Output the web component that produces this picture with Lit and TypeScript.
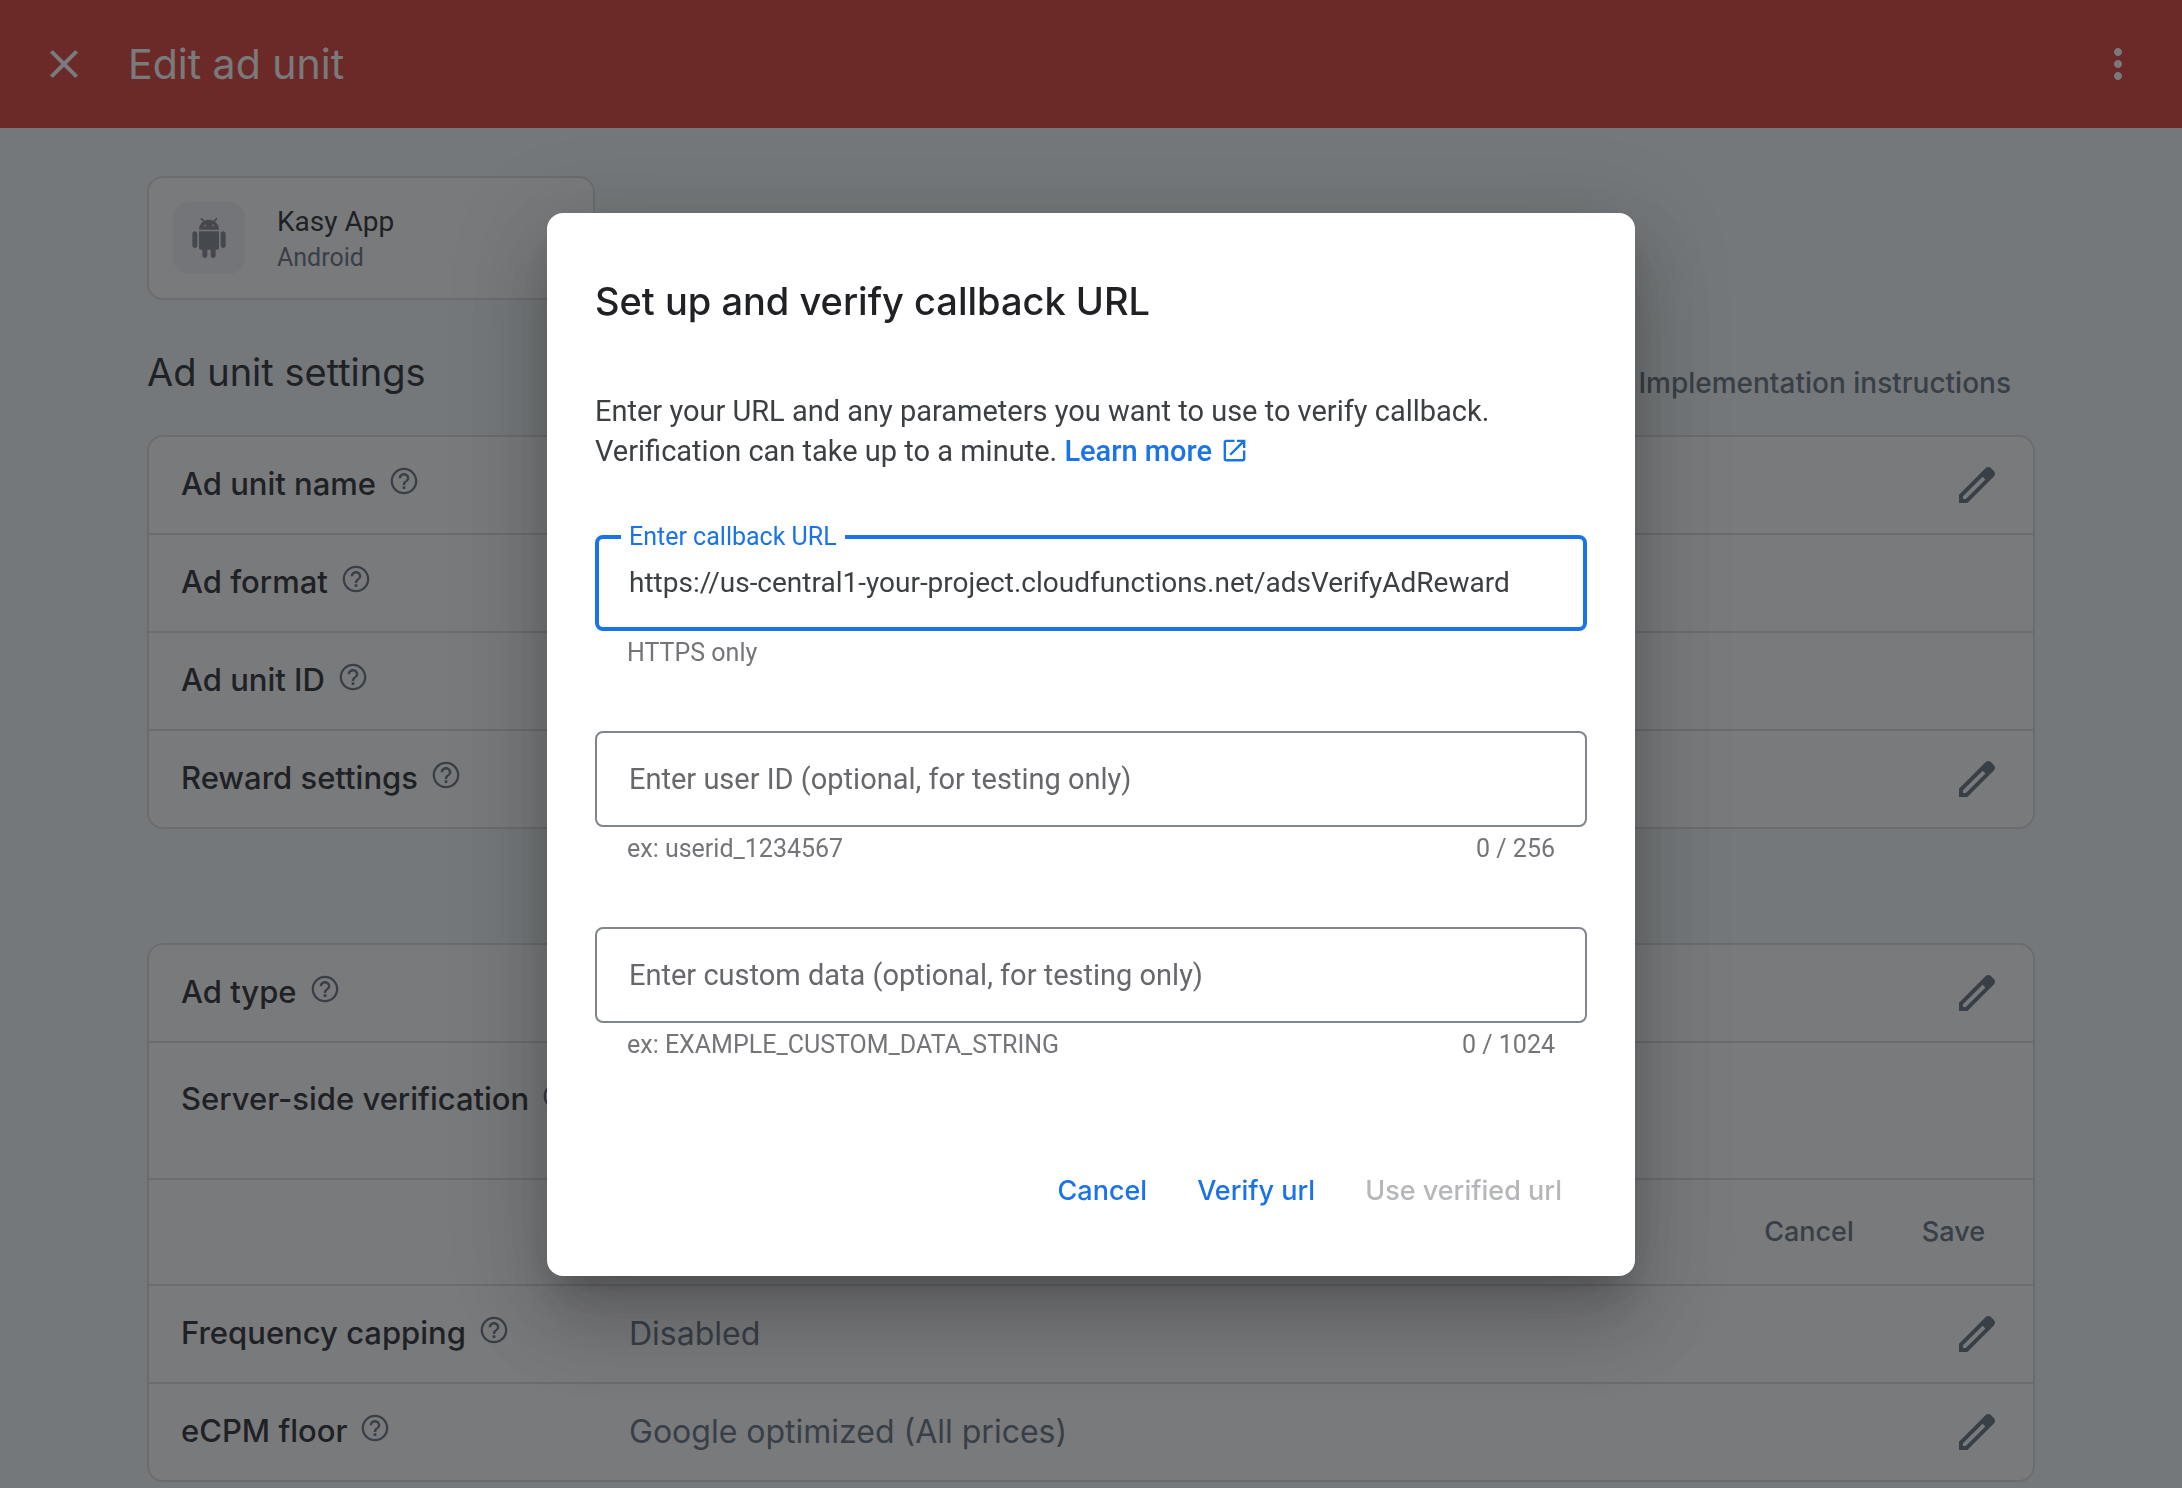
import { LitElement, html, css, svg, nothing } from "lit";
import { customElement, property, state } from "lit/decorators.js";
import { classMap } from "lit/directives/class-map.js";

const paths = {
  close: svg`<path d="M19 6.41 17.59 5 12 10.59 6.41 5 5 6.41 10.59 12 5 17.59 6.41 19 12 13.41 17.59 19 19 17.59 13.41 12z"/>`,
  more: svg`<path d="M12 8c1.1 0 2-.9 2-2s-.9-2-2-2-2 .9-2 2 .9 2 2 2zm0 2c-1.1 0-2 .9-2 2s.9 2 2 2 2-.9 2-2-.9-2-2-2zm0 6c-1.1 0-2 .9-2 2s.9 2 2 2 2-.9 2-2-.9-2-2-2z"/>`,
  edit: svg`<path d="M20.41 4.94l-1.35-1.35c-.78-.78-2.05-.78-2.83 0L3 16.82V21h4.18L20.41 7.77c.79-.78.79-2.05 0-2.83zm-14 14.12L5 19v-1.36l9.82-9.82 1.41 1.41-9.82 9.83z"/>`,
  help: svg`<path d="M11 18h2v-2h-2v2zm1-16C6.48 2 2 6.48 2 12s4.48 10 10 10 10-4.48 10-10S17.52 2 12 2zm0 18.3c-4.58 0-8.3-3.72-8.3-8.3s3.72-8.3 8.3-8.3 8.3 3.72 8.3 8.3-3.72 8.3-8.3 8.3zM12 6c-2.21 0-4 1.79-4 4h1.8c0-1.2 1-2.2 2.2-2.2s2.2 1 2.2 2.2c0 2-3.1 1.75-3.1 5h1.8c0-2.25 3.1-2.5 3.1-5 0-2.21-1.79-4-4-4z"/>`,
  launch: svg`<path d="M19 19H5V5h7V3H5c-1.11 0-2 .9-2 2v14c0 1.1.89 2 2 2h14c1.1 0 2-.9 2-2v-7h-2v7zM14 3v2h3.59l-9.83 9.83 1.41 1.41L19 6.41V10h2V3h-7z"/>`,
  android: svg`<path d="M6 18c0 .55.45 1 1 1h1v3.5c0 .83.67 1.5 1.5 1.5s1.5-.67 1.5-1.5V19h2v3.5c0 .83.67 1.5 1.5 1.5s1.5-.67 1.5-1.5V19h1c.55 0 1-.45 1-1V8H6v10zM3.5 8C2.67 8 2 8.67 2 9.5v7c0 .83.67 1.5 1.5 1.5S5 17.33 5 16.5v-7C5 8.67 4.33 8 3.5 8zm17 0c-.83 0-1.5.67-1.5 1.5v7c0 .83.67 1.5 1.5 1.5s1.5-.67 1.5-1.5v-7c0-.83-.67-1.5-1.5-1.5zm-4.97-5.84l1.3-1.3c.2-.2.2-.51 0-.71-.2-.2-.51-.2-.71 0l-1.48 1.48C13.85 1.23 12.95 1 12 1c-.96 0-1.86.23-2.66.63L7.85.15c-.2-.2-.51-.2-.71 0-.2.2-.2.51 0 .71l1.31 1.31C6.97 3.26 6 5.01 6 7h12c0-1.99-.97-3.75-2.47-4.84zM10 5H9V4h1v1zm5 0h-1V4h1v1z"/>`,
};

const icon = (name: keyof typeof paths) =>
  html`<svg class="icon" viewBox="0 0 24 24" aria-hidden="true">${paths[name]}</svg>`;

const base = css`
  * {
    box-sizing: border-box;
  }
  .icon {
    display: block;
    width: 100%;
    height: 100%;
    fill: currentColor;
  }
  button {
    margin: 0;
    padding: 0;
    border: 0;
    background: none;
    color: inherit;
    font: inherit;
    cursor: pointer;
  }
  a {
    color: inherit;
    text-decoration: none;
  }
`;

interface Setting {
  label?: string;
  value?: string;
  editable?: boolean;
  kind?: "tall" | "actions";
}

/** Bordered list of ad unit settings. */
@customElement("settings-card")
export class SettingsCard extends LitElement {
  @property({ attribute: false }) rows: Setting[] = [];

  static styles = [
    base,
    css`
      :host {
        display: block;
        border: 2px solid #dadce0;
        border-radius: 16px;
        background: #fff;
      }
      .row {
        display: grid;
        grid-template-columns: 448px 1fr auto;
        align-items: center;
        min-height: 98px;
        padding: 0 32px;
        border-bottom: 2px solid #dadce0;
      }
      .row:last-child {
        min-height: 96px;
        border-bottom: 0;
      }
      .row.tall {
        min-height: 137px;
        align-items: start;
        padding-top: 36px;
      }
      .row.actions {
        display: flex;
        justify-content: flex-end;
        gap: 20px;
        min-height: 106px;
        padding: 0 24px;
      }
      .label {
        display: flex;
        align-items: center;
        gap: 12px;
        padding-bottom: 2px;
        font-size: 31px;
        font-weight: 500;
        line-height: 40px;
        color: #202124;
        white-space: nowrap;
      }
      .help {
        width: 32px;
        height: 32px;
        margin-bottom: 6px;
        color: #5f6c7a;
      }
      .value {
        font-size: 32px;
        line-height: 40px;
        color: #5f6c7a;
      }
      .edit {
        grid-column: 3;
        width: 48px;
        height: 48px;
        color: #5f6c7a;
      }
      .action {
        padding: 0 24px;
        font-size: 27px;
        font-weight: 500;
        line-height: 72px;
        color: #5f6c7a;
      }
    `,
  ];

  private renderRow(row: Setting) {
    if (row.kind === "actions") {
      return html`<div class="row actions">
        <button class="action" type="button">Cancel</button>
        <button class="action" type="button">Save</button>
      </div>`;
    }
    return html`<div class=${classMap({ row: true, tall: row.kind === "tall" })}>
      <div class="label">
        <span>${row.label}</span>
        <button class="help" type="button" aria-label="Help: ${row.label}">${icon("help")}</button>
      </div>
      <div class="value">${row.value ?? nothing}</div>
      ${row.editable
        ? html`<button class="edit" type="button" aria-label="Edit ${row.label}">${icon("edit")}</button>`
        : nothing}
    </div>`;
  }

  render() {
    return this.rows.map((row) => this.renderRow(row));
  }
}

/** Outlined text field with a label, helper text and character counter. */
@customElement("outlined-field")
export class OutlinedField extends LitElement {
  @property() label = "";
  @property() value = "";
  @property() hint = "";
  @property({ type: Number }) max = 0;
  @property({ type: Boolean }) active = false;

  static styles = [
    base,
    css`
      :host {
        display: block;
      }
      .box {
        position: relative;
      }
      .input {
        display: block;
        width: 100%;
        height: 96px;
        margin: 0;
        padding: 0 32px;
        border: 2px solid #80868b;
        border-radius: 8px;
        outline: 0;
        background: #fff;
        color: #3c4043;
        font: 400 28px Roboto, sans-serif;
      }
      .label {
        position: absolute;
        top: 0;
        left: 34px;
        font-size: 29px;
        line-height: 96px;
        color: #66686b;
        pointer-events: none;
      }
      .box.floated .label {
        top: -12px;
        left: 26px;
        padding: 0 8px;
        background: #fff;
        font-size: 25px;
        line-height: 28px;
      }
      .box.active .input {
        padding: 0 30px;
        border: 4px solid #1a73e8;
      }
      .box.active .label {
        color: #1a73e8;
      }
      .foot {
        display: flex;
        justify-content: space-between;
        margin-top: 8px;
        padding: 0 32px;
        font-size: 25px;
        line-height: 28px;
        color: #737578;
      }
    `,
  ];

  private onInput(event: Event) {
    this.value = (event.target as HTMLInputElement).value;
  }

  render() {
    const floated = this.active || this.value !== "";
    return html`
      <div class=${classMap({ box: true, floated, active: this.active })}>
        <input
          class="input"
          id="field"
          type="text"
          .value=${this.value}
          aria-describedby="hint"
          @input=${this.onInput}
          @focus=${() => (this.active = true)}
          @blur=${() => (this.active = false)}
        />
        <label class="label" for="field">${this.label}</label>
      </div>
      <div class="foot">
        <span id="hint">${this.hint}</span>
        ${this.max ? html`<span>${this.value.length} / ${this.max}</span>` : nothing}
      </div>
    `;
  }
}

@customElement("app-root")
export class AppRoot extends LitElement {
  @state() private unitRows: Setting[] = [
    { label: "Ad unit name", editable: true },
    { label: "Ad format" },
    { label: "Ad unit ID" },
    { label: "Reward settings", editable: true },
  ];

  @state() private typeRows: Setting[] = [
    { label: "Ad type", editable: true },
    { label: "Server-side verification", kind: "tall" },
    { kind: "actions" },
    { label: "Frequency capping", value: "Disabled", editable: true },
    { label: "eCPM floor", value: "Google optimized (All prices)", editable: true },
  ];

  static styles = [
    base,
    css`
      :host {
        display: block;
        min-height: 100vh;
        background: #f2f9f9;
        font-family: Inter, sans-serif;
      }
      .bar {
        display: flex;
        align-items: center;
        gap: 40px;
        height: 128px;
        padding: 0 40px;
        background: #dc382e;
        color: #fff;
      }
      .bar-title {
        flex: 1;
        margin: 0;
        font-size: 41px;
        font-weight: 400;
        line-height: 56px;
      }
      .bar-button {
        width: 48px;
        height: 48px;
      }
      .page {
        padding: 48px 147px 0;
      }
      .app {
        display: flex;
        align-items: center;
        gap: 32px;
        width: 448px;
        height: 124px;
        padding: 0 24px;
        border: 2px solid #dadce0;
        border-radius: 16px;
        background: #fff;
        font-family: Roboto, sans-serif;
      }
      .app-icon {
        display: grid;
        place-items: center;
        width: 72px;
        height: 72px;
        border-radius: 16px;
        background: #f1f3f4;
        color: #7d868f;
      }
      .app-glyph {
        width: 40px;
        height: 40px;
      }
      .app-text {
        padding-top: 4px;
      }
      .app-name {
        font-size: 28px;
        line-height: 36px;
        color: #202124;
      }
      .app-platform {
        font-size: 25px;
        line-height: 36px;
        color: #5f6c7a;
      }
      .heading {
        display: flex;
        justify-content: space-between;
        align-items: flex-end;
        margin: 48px 0 32px;
      }
      .heading-title {
        margin: 0;
        padding-bottom: 7px;
        font-size: 38px;
        font-weight: 400;
        line-height: 48px;
        color: #202124;
      }
      .heading-link {
        padding-right: 24px;
        font-size: 28px;
        font-weight: 500;
        line-height: 40px;
        color: #5f6c7a;
      }
      .second {
        margin-top: 114px;
      }
      .backdrop {
        position: fixed;
        inset: 0;
        display: flex;
        align-items: center;
        justify-content: center;
        padding: 24px;
        background: rgba(32, 33, 36, 0.6);
      }
      .dialog {
        width: 100%;
        max-width: 1088px;
        padding: 64px 48px 49px;
        border-radius: 16px;
        background: #fff;
        box-shadow: 0 22px 30px -14px rgba(0, 0, 0, 0.2), 0 48px 76px 6px rgba(0, 0, 0, 0.14),
          0 18px 92px 16px rgba(0, 0, 0, 0.12);
        font-family: Roboto, sans-serif;
      }
      .dialog-title {
        margin: 0;
        font-family: Inter, sans-serif;
        font-size: 38px;
        font-weight: 500;
        line-height: 48px;
        color: #202124;
      }
      .dialog-text {
        margin: 66px 0 64px;
        font-size: 29px;
        line-height: 40px;
        color: #3c4043;
      }
      .learn {
        display: inline-flex;
        align-items: center;
        gap: 8px;
        font-weight: 500;
        color: #1a73e8;
      }
      .learn-icon {
        width: 29px;
        height: 29px;
      }
      .fields {
        display: grid;
        gap: 64px;
      }
      .dialog-actions {
        display: flex;
        justify-content: flex-end;
        margin-top: 96px;
        font-family: Inter, sans-serif;
      }
      .dialog-button {
        padding: 0 25px;
        font-size: 27px;
        font-weight: 500;
        line-height: 72px;
        color: #1a73e8;
      }
      .dialog-button:disabled {
        color: #b5b7b9;
        cursor: default;
      }
    `,
  ];

  render() {
    return html`
      <header class="bar">
        <button class="bar-button" type="button" aria-label="Close">${icon("close")}</button>
        <h1 class="bar-title">Edit ad unit</h1>
        <button class="bar-button" type="button" aria-label="More options">${icon("more")}</button>
      </header>

      <main class="page">
        <div class="app">
          <div class="app-icon"><div class="app-glyph">${icon("android")}</div></div>
          <div class="app-text">
            <div class="app-name">Kasy App</div>
            <div class="app-platform">Android</div>
          </div>
        </div>
        <div class="heading">
          <h2 class="heading-title">Ad unit settings</h2>
          <a class="heading-link" href="#instructions">Implementation instructions</a>
        </div>
        <settings-card .rows=${this.unitRows}></settings-card>
        <settings-card class="second" .rows=${this.typeRows}></settings-card>
      </main>

      <div class="backdrop">
        <section class="dialog" role="dialog" aria-modal="true" aria-labelledby="dialog-title">
          <h2 class="dialog-title" id="dialog-title">Set up and verify callback URL</h2>
          <p class="dialog-text">
            Enter your URL and any parameters you want to use to verify callback.<br />
            Verification can take up to a minute.
            <a class="learn" href="#learn-more">Learn more <span class="learn-icon">${icon("launch")}</span></a>
          </p>
          <div class="fields">
            <outlined-field
              active
              label="Enter callback URL"
              value="https://us-central1-your-project.cloudfunctions.net/adsVerifyAdReward"
              hint="HTTPS only"
            ></outlined-field>
            <outlined-field
              label="Enter user ID (optional, for testing only)"
              hint="ex: userid_1234567"
              max="256"
            ></outlined-field>
            <outlined-field
              label="Enter custom data (optional, for testing only)"
              hint="ex: EXAMPLE_CUSTOM_DATA_STRING"
              max="1024"
            ></outlined-field>
          </div>
          <div class="dialog-actions">
            <button class="dialog-button" type="button">Cancel</button>
            <button class="dialog-button" type="button">Verify url</button>
            <button class="dialog-button" type="button" disabled>Use verified url</button>
          </div>
        </section>
      </div>
    `;
  }
}
